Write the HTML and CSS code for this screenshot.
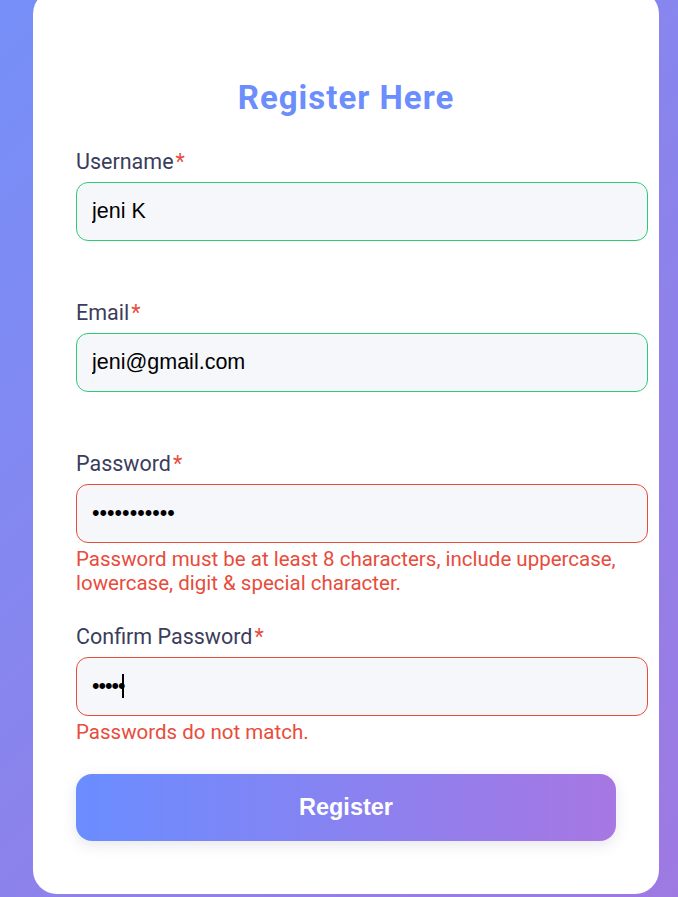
FILE: index.html
```html
<!DOCTYPE html>
<html lang="en">
<head>
<meta charset="UTF-8">
<title>Register</title>
<link rel="stylesheet" href="styles.css">
</head>
<body>
  <div class="card">
    <h2 class="title">Register Here</h2>
    <form class="form">
      <div class="group">
        <label class="label">Username<span class="req">*</span></label>
        <input class="field ok" type="text" value="jeni K">
        <div class="error"></div>
      </div>
      <div class="group">
        <label class="label">Email<span class="req">*</span></label>
        <input class="field ok" type="email" value="jeni@gmail.com">
        <div class="error"></div>
      </div>
      <div class="group">
        <label class="label">Password<span class="req">*</span></label>
        <input class="field bad" type="password" value="abcdefghijk">
        <div class="error">Password must be at least 8 characters, include uppercase, lowercase, digit &amp; special character.</div>
      </div>
      <div class="group last">
        <label class="label">Confirm Password<span class="req">*</span></label>
        <div class="field-wrap">
          <input class="field bad tight" type="password" value="abcde">
          <span class="caret"></span>
        </div>
        <div class="error">Passwords do not match.</div>
      </div>
      <button class="btn" type="button">Register</button>
    </form>
  </div>
</body>
</html>
```
FILE: styles.css
```css
* { box-sizing: content-box; }
html, body { margin: 0; height: 100%; }
body {
  background: linear-gradient(135deg, #768ff8 0%, #9e79e2 100%);
  font-family: Roboto, "Liberation Sans", sans-serif;
  overflow: hidden;
  display: flex;
  align-items: flex-start;
  padding-left: 33px;
}
.card {
  width: 540px;
  margin-top: -10px;
  padding: 88px 43px 53px;
  background: #ffffff;
  border-radius: 24px;
}
.title {
  margin: 0 0 32px;
  text-align: center;
  font-family: Roboto, sans-serif;
  font-weight: 700;
  font-size: 33px;
  line-height: 40px;
  letter-spacing: 1px;
  color: #6c8dfc;
}
.form { display: flex; flex-direction: column; }
.group { display: flex; flex-direction: column; margin-bottom: 30px; }
.group.last { margin-bottom: 28px; }
.label {
  font-size: 21.5px;
  line-height: 24px;
  color: #3b3d5c;
  margin-bottom: 8px;
}
.req { color: #e74c3c; margin-left: 2px; }
.field-wrap { position: relative; }
.field {
  display: block;
  width: 100%;
  margin: 0;
  padding: 16px 15px;
  border: 1px solid #2ecc71;
  border-radius: 12px;
  background: #f5f7fb;
  font-family: "Liberation Sans", Arial, sans-serif;
  font-size: 21.5px;
  line-height: 25px;
  height: 25px;
  color: #000;
  outline: none;
}
.field.bad { border-color: #e74c3c; }
.field.tight { letter-spacing: -1px; }
.caret {
  position: absolute;
  left: 46px;
  top: 17px;
  width: 2px;
  height: 24px;
  background: #000;
}
.error {
  margin-top: 4px;
  min-height: 26px;
  font-size: 20.5px;
  line-height: 24px;
  color: #e74c3c;
}
.btn {
  width: 540px;
  height: 67px;
  border: none;
  border-radius: 16px;
  background: linear-gradient(90deg, #6a8dff 0%, #a777e3 100%);
  color: #fff;
  font-family: "Liberation Sans", Arial, sans-serif;
  font-weight: 700;
  font-size: 23.5px;
  box-shadow: 0 4px 14px rgba(90, 90, 140, 0.15);
  padding: 0;
}
```
